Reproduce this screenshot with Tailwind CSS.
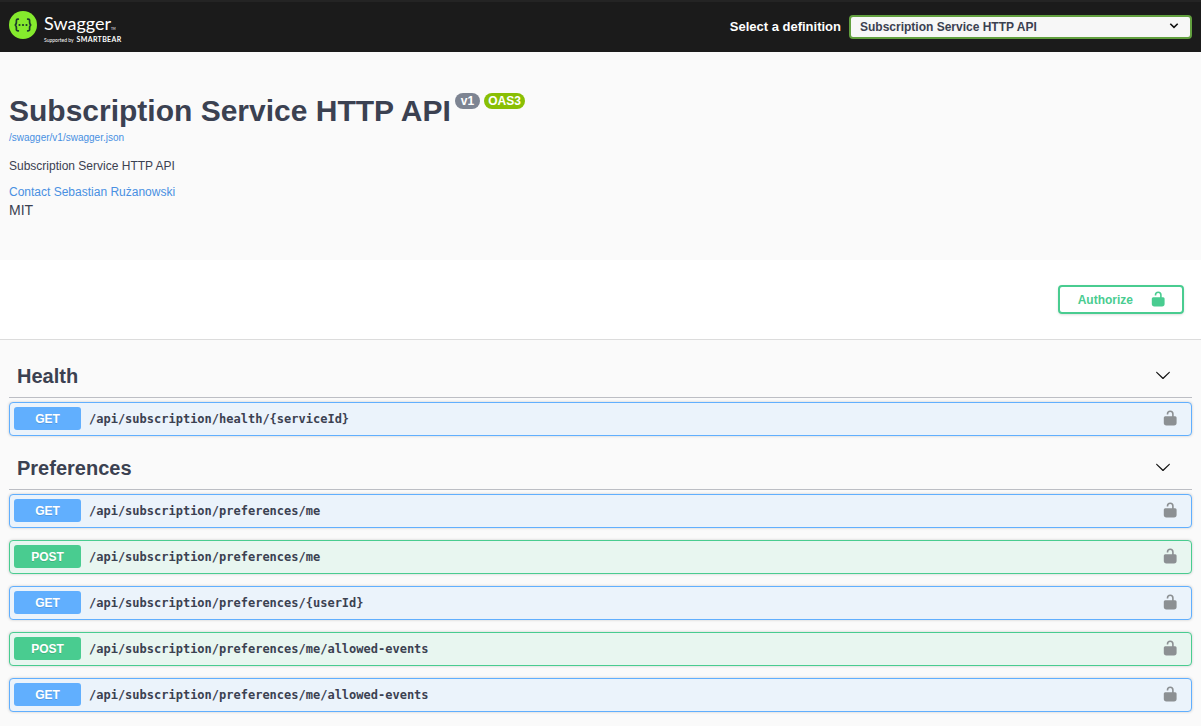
<!DOCTYPE html>
<html lang="en">
<head>
<meta charset="utf-8">
<meta name="viewport" content="width=device-width, initial-scale=1">
<title>Swagger UI</title>
<script src="https://cdn.jsdelivr.net/npm/@tailwindcss/browser@4"></script>
</head>
<body class="min-h-screen bg-[#fafafa] font-['Liberation_Sans',Arial,sans-serif] text-[#3b4151]">
<svg class="hidden" aria-hidden="true">
  <symbol id="unlocked" viewBox="0 0 16 16"><path d="M5.5 4.400V4C5.500 2.200 6.400 1.300 8.200 1.300S10.900 2.200 10.900 4V8" fill="none" stroke="currentColor" stroke-width="1.600"/><path d="M3.200 6.300H13.200Q14.600 6.300 14.600 7.800V12.800Q14.600 15.500 12 15.500H4.400Q1.800 15.500 1.800 12.800V7.800Q1.800 6.300 3.200 6.300Z"/></symbol>
  <symbol id="chevron" viewBox="0 0 20 20"><path d="M17.418 6.109c.272-.268.709-.268.979 0s.271.701 0 .969l-7.908 7.830c-.27.268-.707.268-.979 0l-7.908-7.830c-.27-.268-.27-.701 0-.969.271-.268.709-.268.979 0L10 13.250z"/></symbol>
</svg>

<header class="flex h-13 items-center justify-between border-t-2 border-[#242424] bg-[#1b1b1b] px-[9px]">
  <a href="#" aria-label="Swagger, supported by SmartBear" class="flex items-center gap-[7px] text-white">
    <svg class="size-7 -mt-1" viewBox="0 0 28 28" fill="none" stroke="#1b3a2c" stroke-width="1.7" stroke-linecap="round">
      <circle cx="14" cy="14" r="14" fill="#85ea2d" stroke="none"/>
      <path d="M9.3 8.200C7.200 8 7.300 9.300 7.400 10.800C7.500 12.800 7.200 13.700 5.800 14C7.200 14.300 7.500 15.200 7.400 17.200C7.300 18.700 7.200 20 9.300 19.800M18.700 8.200C20.800 8 20.700 9.300 20.600 10.800C20.500 12.800 20.800 13.700 22.200 14C20.800 14.300 20.500 15.200 20.600 17.200C20.700 18.700 20.800 20 18.700 19.800"/>
      <g fill="#1b3a2c" stroke="none"><circle cx="10.5" cy="14" r="1.1"/><circle cx="14" cy="14" r="1.1"/><circle cx="17.5" cy="14" r="1.1"/></g>
    </svg>
    <span class="flex flex-col pt-px font-[Lato,sans-serif]">
      <span class="flex items-baseline text-[18px] leading-[24px]">Swagger<span class="text-[3px] leading-none">TM</span></span>
      <span class="flex items-baseline gap-[3px] leading-[8px]"><span class="text-[5px]">Supported by</span><span class="text-[7px] font-bold tracking-wider">SMARTBEAR</span></span>
    </span>
  </a>
  <div class="flex items-center gap-2">
    <label for="definition" class="text-[13px] font-bold text-white">Select a definition</label>
    <div class="relative w-[343px]">
      <select id="definition" class="block h-6 w-full appearance-none rounded border-2 border-[#62a03f] bg-[#f7f7f7] pr-8 pl-[9px] text-xs font-bold">
        <option>Subscription Service HTTP API</option>
      </select>
      <svg class="pointer-events-none absolute top-1 right-[11px] size-[14px]" viewBox="0 0 14 14" fill="none" stroke="#111" stroke-width="1.6"><path d="M3.3 4.700 7 8.300 10.700 4.700"/></svg>
    </div>
  </div>
</header>

<main>
  <section class="flex h-[208px] flex-col items-start px-[9px] pt-[41px]">
    <div class="flex items-start gap-1">
      <h1 class="text-[30px] leading-9 font-bold">Subscription Service HTTP API</h1>
      <span class="rounded-full bg-[#7d8492] px-[6px] text-xs leading-4 font-bold text-white">v1</span>
      <span class="rounded-full bg-[#89bf04] px-1 text-xs leading-4 font-bold text-white">OAS3</span>
    </div>
    <a href="#" class="mt-px text-[10px] leading-4 text-[#4990e2]">/swagger/v1/swagger.json</a>
    <p class="mt-3 text-xs leading-4">Subscription Service HTTP API</p>
    <a href="#" class="mt-[10px] text-xs leading-4 text-[#4990e2]">Contact Sebastian Rużanowski</a>
    <p class="mt-[2px] text-sm leading-4">MIT</p>
  </section>

  <section class="flex h-20 items-center justify-end border-b border-[#dcdcdc] bg-white px-[17px]">
    <button type="button" class="flex h-[29px] items-center gap-[17px] rounded border-2 border-[#49cc90] pr-4 pl-[18px] text-xs font-bold text-[#49cc90] shadow-sm">
      Authorize
      <svg class="size-4 -mt-[2px] fill-current" aria-hidden="true"><use href="#unlocked"/></svg>
    </button>
  </section>

  <div class="px-[9px] pt-1">
    <section>
      <h2 class="mb-1 h-[54px] border-b border-[#bcbec4]">
        <button type="button" class="flex h-full w-full items-center justify-between pt-[10px] pr-[21px] pl-2 text-left text-xl font-bold">Health<svg class="mb-[2px] size-4 fill-[#111]" aria-hidden="true"><use href="#chevron"/></svg></button>
      </h2>
      <div class="flex flex-col gap-3" id="health"></div>
    </section>
    <section>
      <h2 class="mb-1 h-[54px] border-b border-[#bcbec4]">
        <button type="button" class="flex h-full w-full items-center justify-between pt-[10px] pr-[21px] pl-2 text-left text-xl font-bold">Preferences<svg class="mb-[2px] size-4 fill-[#111]" aria-hidden="true"><use href="#chevron"/></svg></button>
      </h2>
      <div class="flex flex-col gap-3" id="preferences"></div>
    </section>
  </div>
</main>

<script>
  const styles = {
    GET: { row: "border-[#61affe] bg-[#ebf3fb]", tag: "bg-[#61affe]" },
    POST: { row: "border-[#49cc90] bg-[#e8f6f0]", tag: "bg-[#49cc90]" },
  };
  const operations = {
    health: [["GET", "/api/subscription/health/{serviceId}"]],
    preferences: [
      ["GET", "/api/subscription/preferences/me"],
      ["POST", "/api/subscription/preferences/me"],
      ["GET", "/api/subscription/preferences/{userId}"],
      ["POST", "/api/subscription/preferences/me/allowed-events"],
      ["GET", "/api/subscription/preferences/me/allowed-events"],
    ],
  };
  for (const [tag, list] of Object.entries(operations)) {
    document.getElementById(tag).innerHTML = list.map(([method, path]) => `
      <div class="flex h-[34px] items-center rounded border pb-px shadow-[0_0_3px_rgba(0,0,0,0.19)] ${styles[method].row}">
        <button type="button" class="flex h-full flex-1 items-center gap-2 pl-1 text-left">
          <span class="w-[67px] rounded-[3px] pt-px text-center text-xs leading-[22px] font-bold text-white text-shadow-2xs ${styles[method].tag}">${method}</span>
          <span class="font-['DejaVu_Sans_Mono',monospace] text-xs font-bold">${path}</span>
        </button>
        <button type="button" aria-label="Authorization for ${method} ${path}" class="mr-[13px] flex pb-px text-[#8c9093]">
          <svg class="size-4 fill-current" aria-hidden="true"><use href="#unlocked"/></svg>
        </button>
      </div>`).join("");
  }
</script>
</body>
</html>
